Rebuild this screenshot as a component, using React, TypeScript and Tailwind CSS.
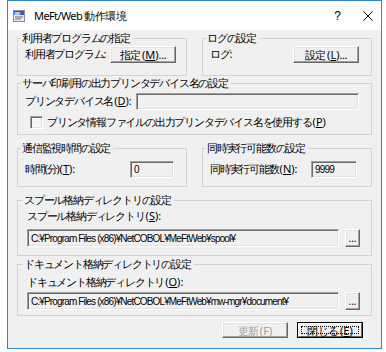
import type { ReactNode } from "react";

const ui = 'font-[\'Noto_Sans_CJK_JP\',\'Noto_Sans\',sans-serif] [font-feature-settings:"palt"] [font-variant-east-asian:proportional-width] text-[11px] tracking-[-1.2px] text-black whitespace-nowrap';

// mnemonic like (M), drawn with normal spacing so the parentheses don't collapse
function Mn({ k }: { k: string }) {
  return (
    <span className="tracking-[0px] pl-[1px]">
      (<u>{k}</u>)
    </span>
  );
}

function Group({ title, className, children }: { title: string; className?: string; children: ReactNode }) {
  return (
    <fieldset className={`min-w-0 border border-[#d3d3d3] px-[7px] ${className ?? ""}`}>
      <legend className="-ml-[4px] pl-[1px] pr-[3px] leading-[14px]">{title}</legend>
      {children}
    </fieldset>
  );
}

function Button({ children, className, disabled }: { children: ReactNode; className?: string; disabled?: boolean }) {
  return (
    <button
      type="button"
      disabled={disabled}
      className={`flex items-center justify-center bg-[#f0f0f0] border border-t-white border-l-white border-r-[#696969] border-b-[#696969] shadow-[inset_-1px_-1px_0_#a0a0a0,inset_1px_1px_0_#e3e3e3] leading-none tracking-[-0.4px] ${disabled ? "text-[#a0a0a0]" : "text-black"} ${className ?? ""}`}
    >
      {children}
    </button>
  );
}

function Field({ value, className }: { value?: string; className?: string }) {
  return (
    <div
      className={`flex items-center bg-[#f0f0f0] border border-t-[#a0a0a0] border-l-[#a0a0a0] border-b-white border-r-white shadow-[inset_1px_1px_0_#696969,inset_-1px_-1px_0_#e3e3e3] pl-[3px] overflow-hidden whitespace-nowrap font-['Liberation_Sans',sans-serif] text-[10px] tracking-[-0.85px] ${className ?? ""}`}
    >
      {value}
    </div>
  );
}

function AppIcon() {
  return (
    <svg width="12" height="12" viewBox="0 0 12 12" className="shrink-0">
      <rect x="0.5" y="0.5" width="11" height="11" fill="#e8e8f0" stroke="#8a8a9a" />
      <rect x="1" y="1" width="10" height="4" fill="#3b57c4" />
      <text x="1.5" y="4.6" fontSize="4" fill="#fff" fontFamily="Liberation Sans" fontWeight="bold">DW</text>
      <line x1="2" y1="7" x2="10" y2="7" stroke="#6a6a7a" />
      <line x1="2" y1="9" x2="8" y2="9" stroke="#6a6a7a" />
    </svg>
  );
}

export default function App() {
  return (
    <div className={`w-[386px] h-[352px] bg-white ${ui}`}>
      <div className="ml-[7px] w-[375px] h-[349px] border border-[#2b87d8] bg-[#f0f0f0] flex flex-col">
        {/* title bar */}
        <div className="h-[29px] bg-white flex items-center pl-[5px] pr-[8px] shrink-0">
          <AppIcon />
          <span className="ml-[9px] leading-none tracking-[-0.6px]">MeFt/Web 動作環境</span>
          <span className="ml-auto mr-[22px] font-['Liberation_Sans',sans-serif] text-[12px] tracking-normal">?</span>
          <svg width="10" height="10" viewBox="0 0 10 10">
            <path d="M0.5 0.5 L9.5 9.5 M9.5 0.5 L0.5 9.5" stroke="#000" strokeWidth="1" />
          </svg>
        </div>

        <div className="flex flex-col px-[9px] pt-[1px]">
          {/* row 1 */}
          <div className="grid grid-cols-2 gap-[15px]">
            <Group title="利用者プログラムの指定" className="pb-[12px]">
              <div className="flex items-center h-[17px] mt-[1px]">
                <span className="w-[85px]">利用者プログラム:</span>
                <Button className="w-[66px] h-[17px]">
                  指定<Mn k="M" />...
                </Button>
              </div>
            </Group>
            <Group title="ログの設定" className="pb-[12px]">
              <div className="flex items-center h-[17px] mt-[1px]">
                <span className="w-[83px]">ログ:</span>
                <Button className="w-[66px] h-[17px]">
                  設定<Mn k="L" />...
                </Button>
              </div>
            </Group>
          </div>

          {/* printer */}
          <Group title="サーバ印刷用の出力プリンタデバイス名の設定" className="pb-[5px]">
            <div className="flex items-center h-[17px] mt-[3px]">
              <span className="w-[111px]">
                プリンタデバイス名<Mn k="D" />:
              </span>
              <Field className="w-[223px] h-[17px]" />
            </div>
            <div className="flex items-center h-[14px] mt-[5px] pl-[5px]">
              <div className="w-[13px] h-[13px] bg-[#f7f7f7] border border-t-[#a0a0a0] border-l-[#a0a0a0] border-b-white border-r-white shadow-[inset_1px_1px_0_#696969,inset_-1px_-1px_0_#e3e3e3]" />
              <span className="ml-[4px]">
                プリンタ情報ファイルの出力プリンタデバイス名を使用する<Mn k="P" />
              </span>
            </div>
          </Group>

          {/* row 3 */}
          <div className="grid grid-cols-2 gap-[15px] mt-[6px]">
            <Group title="通信監視時間の設定" className="pb-[8px]">
              <div className="flex items-center h-[17px] mt-[6px]">
                <span className="w-[105px]">
                  時間(分)<Mn k="T" />:
                </span>
                <Field value="0" className="w-[44px] h-[17px]" />
              </div>
            </Group>
            <Group title="同時実行可能数の設定" className="pb-[8px]">
              <div className="flex items-center h-[17px] mt-[6px]">
                <span className="w-[101px]">
                  同時実行可能数<Mn k="N" />:
                </span>
                <Field value="9999" className="w-[46px] h-[17px]" />
              </div>
            </Group>
          </div>

          {/* spool */}
          <Group title="スプール格納ディレクトリの設定" className="pb-[8px] mt-[6px] pl-[9px]">
            <div className="h-[14px] mt-[2px] leading-[14px]">
              スプール格納ディレクトリ<Mn k="S" />:
            </div>
            <div className="flex items-center mt-[6px] gap-[6px]">
              <Field value="C:¥Program Files (x86)¥NetCOBOL¥MeFtWeb¥spool¥" className="w-[312px] h-[18px]" />
              <Button className="w-[15px] h-[18px] text-[10px] tracking-normal items-end pb-[3px]">...</Button>
            </div>
          </Group>

          {/* document */}
          <Group title="ドキュメント格納ディレクトリの設定" className="pb-[5px] mt-[1px] pl-[9px]">
            <div className="h-[14px] mt-[4px] leading-[14px]">
              ドキュメント格納ディレクトリ<Mn k="O" />:
            </div>
            <div className="flex items-center mt-[3px] gap-[6px]">
              <Field value="C:¥Program Files (x86)¥NetCOBOL¥MeFtWeb¥mw-mgr¥document¥" className="w-[312px] h-[18px]" />
              <Button className="w-[15px] h-[18px] text-[10px] tracking-normal items-end pb-[3px]">...</Button>
            </div>
          </Group>

          {/* footer buttons */}
          <div className="flex justify-end gap-[9px] mt-[6px] mr-[9px]">
            <Button disabled className="w-[66px] h-[16px]">
              更新<Mn k="F" />
            </Button>
            <div className="w-[66px] h-[16px] border border-black">
              <div className="w-full h-full flex items-center justify-center bg-[#f0f0f0] border border-t-white border-l-white border-r-[#696969] border-b-[#696969] p-[2px]">
                <div className="w-full h-full flex items-center justify-center outline-1 outline-dotted outline-black -outline-offset-1 leading-none tracking-[-0.4px]">
                  閉じる<Mn k="E" />
                </div>
              </div>
            </div>
          </div>
        </div>
      </div>
    </div>
  );
}
